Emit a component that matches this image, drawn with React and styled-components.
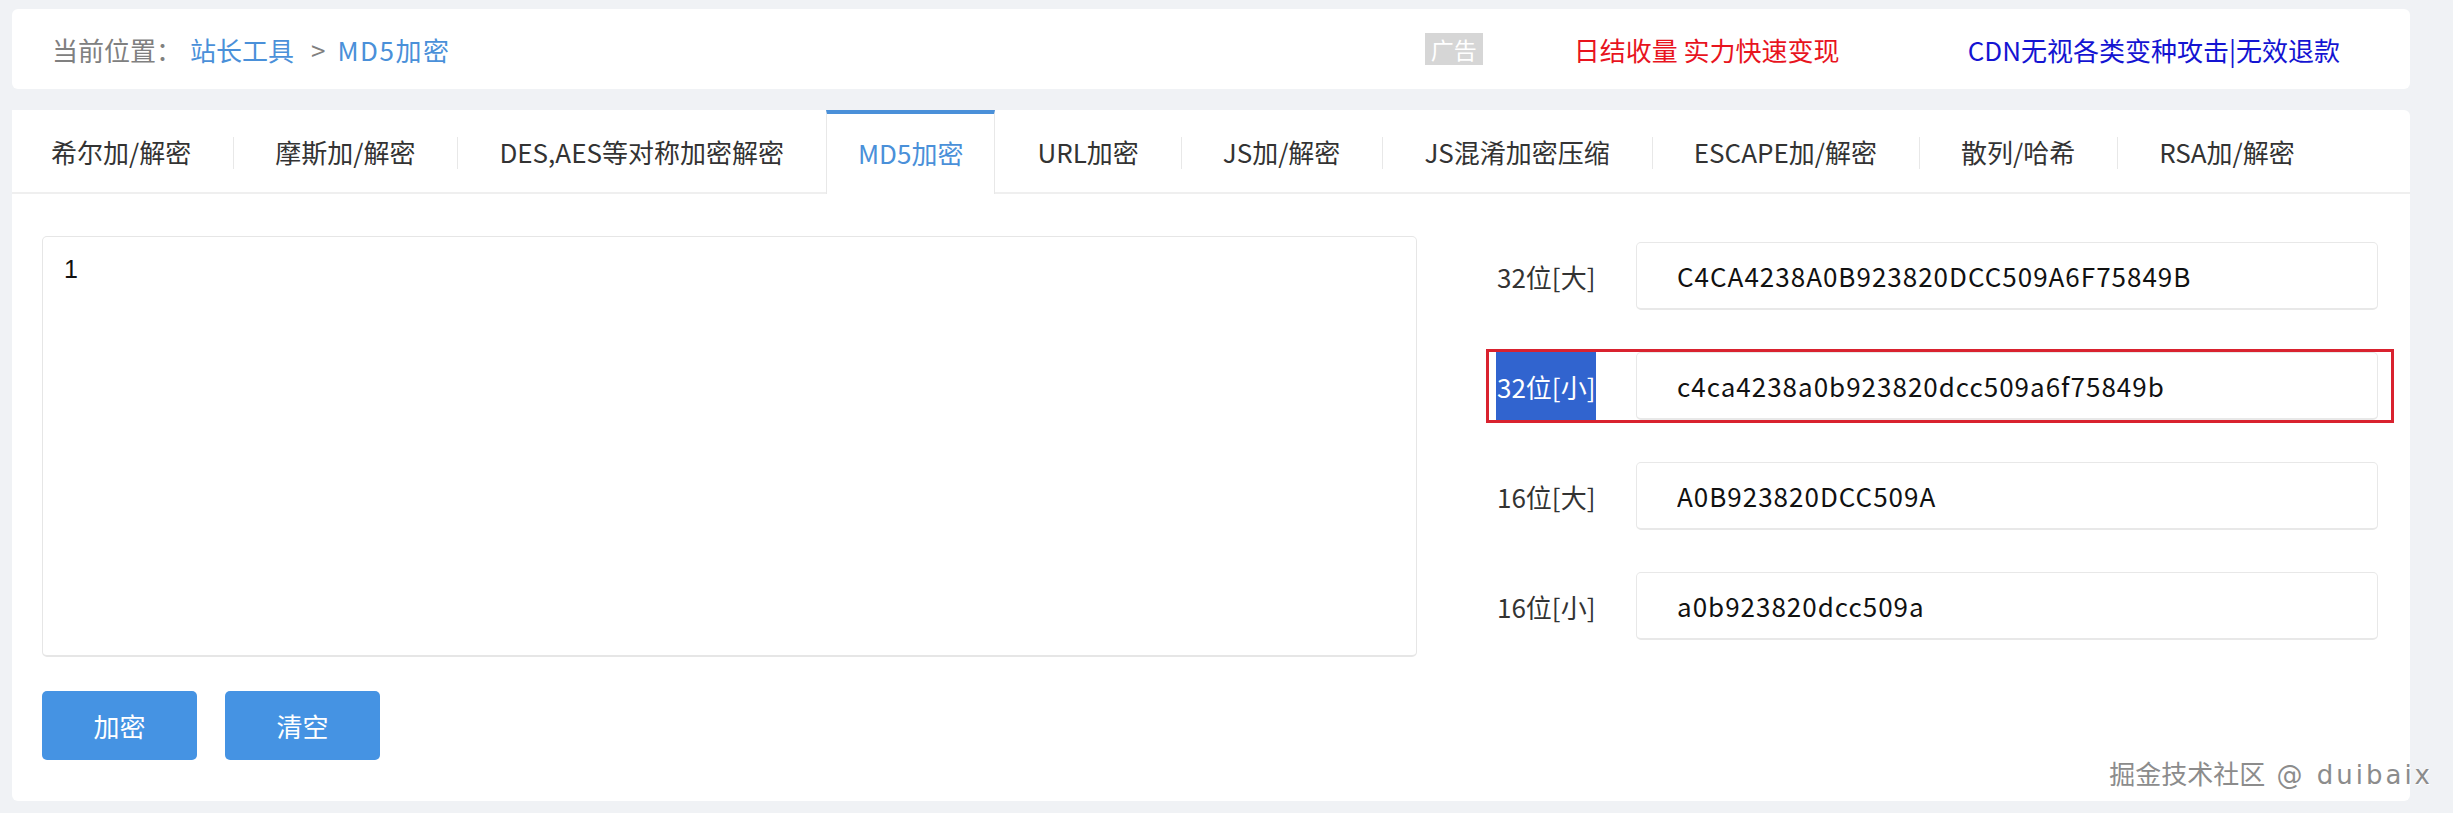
import styled, { createGlobalStyle } from "styled-components"

const GlobalStyle = createGlobalStyle`
    html, body {
        margin: 0;
        padding: 0;
        background: #f0f2f5;
        font-family: "Noto Sans CJK SC", "Noto Sans", sans-serif;
        color: #333;
    }
    * {
        box-sizing: border-box;
    }
`

const tabList = ["希尔加/解密", "摩斯加/解密", "DES,AES等对称加密解密", "MD5加密", "URL加密",
                 "JS加/解密", "JS混淆加密压缩", "ESCAPE加/解密", "散列/哈希", "RSA加/解密"]

const resultList = [{label: "32位[大]", value: "C4CA4238A0B923820DCC509A6F75849B"},
                    {label: "32位[小]", value: "c4ca4238a0b923820dcc509a6f75849b", marked: true},
                    {label: "16位[大]", value: "A0B923820DCC509A"},
                    {label: "16位[小]", value: "a0b923820dcc509a"}]

export default function App() {
    const activeTab = "MD5加密"

    return (
        <Page>
            <GlobalStyle />
            <TopBar>
                <Breadcrumb>
                    <Crumb>当前位置：</Crumb>
                    <CrumbLink>站长工具</CrumbLink>
                    <CrumbArrow>&gt;</CrumbArrow>
                    <CrumbLink wide>MD5加密</CrumbLink>
                </Breadcrumb>
                <AdArea>
                    <AdTag>广告</AdTag>
                    <AdLink color="#e8141e" width={394}>日结收量 实力快速变现</AdLink>
                    <AdLink color="#1414d2">CDN无视各类变种攻击|无效退款</AdLink>
                </AdArea>
            </TopBar>
            <MainCard>
                <TabBar>
                    {tabList.map((tab, index) => {
                        const prevActive = index > 0 && tabList[index - 1] === activeTab
                        return (
                            <Tab key={tab} active={tab === activeTab} first={index === 0 || prevActive}>
                                {tab}
                            </Tab>
                        )
                    })}
                </TabBar>
                <Body>
                    <LeftColumn>
                        <SourceInput defaultValue="1" />
                        <ButtonRow>
                            <Button>加密</Button>
                            <Button>清空</Button>
                        </ButtonRow>
                    </LeftColumn>
                    <ResultList>
                        {resultList.map(item => (
                            <ResultRow key={item.label} marked={item.marked}>
                                <ResultLabel>
                                    <LabelText selected={item.marked}>{item.label}</LabelText>
                                </ResultLabel>
                                <ResultValue readOnly value={item.value} />
                            </ResultRow>
                        ))}
                    </ResultList>
                </Body>
            </MainCard>
            <Watermark>掘金技术社区<WatermarkName> @ duibaix</WatermarkName></Watermark>
        </Page>
    )
}

const Page = styled.div`
    position: relative;
    width: 100%;
    height: 813px;
    padding: 9px 43px 0 12px;
    display: flex;
    flex-direction: column;
    gap: 21px;
    overflow: hidden;
`

const TopBar = styled.div`
    height: 80px;
    background: #fff;
    border-radius: 6px;
    display: flex;
    align-items: center;
    justify-content: space-between;
    padding: 0 70px 0 40px;
    font-size: 26px;
`

const Breadcrumb = styled.div`
    display: flex;
    align-items: center;
`

const Crumb = styled.span`
    color: #808080;
    margin-right: 8px;
`

const CrumbLink = styled.span`
    color: #4a90d9;
    letter-spacing: ${props => props.wide ? "1.5px" : "0"};
`

const CrumbArrow = styled.span`
    color: #808080;
    margin: 0 12px 0 17px;
`

const AdArea = styled.div`
    display: flex;
    align-items: center;
`

const AdTag = styled.span`
    width: 58px;
    height: 32px;
    background: #d6d6d6;
    color: #fff;
    font-size: 23px;
    line-height: 32px;
    text-align: center;
    margin-right: 91px;
`

const AdLink = styled.span`
    color: ${props => props.color};
    width: ${props => props.width ? props.width + "px" : "auto"};
    white-space: nowrap;
`

const MainCard = styled.div`
    height: 691px;
    background: #fff;
    border-radius: 6px;
    display: flex;
    flex-direction: column;
`

const TabBar = styled.div`
    height: 84px;
    display: flex;
    border-bottom: 2px solid #efefef;
`

const Tab = styled.div`
    position: relative;
    height: ${props => props.active ? "84px" : "82px"};
    display: flex;
    align-items: center;
    padding: ${props => props.active ? "0 31px 4px" : "0 42px"};
    font-size: 26px;
    white-space: nowrap;
    color: ${props => props.active ? "#4a90d9" : "#333"};
    background: #fff;
    border-top: ${props => props.active ? "4px solid #4a90d9" : "none"};
    border-left: ${props => props.active ? "1px solid #e8e8e8" : "none"};
    border-right: ${props => props.active ? "1px solid #e8e8e8" : "none"};
    margin-bottom: ${props => props.active ? "-2px" : "0"};
    &:first-child {
        padding-left: ${props => props.active ? "31px" : "39px"};
    }
    &::before {
        content: "";
        display: ${props => props.active || props.first ? "none" : "block"};
        position: absolute;
        left: 0;
        top: 27px;
        height: 32px;
        border-left: 1px solid #e8e8e8;
    }
`

const Body = styled.div`
    flex: 1;
    display: flex;
    gap: 69px;
    padding: 42px 16px 0 30px;
`

const LeftColumn = styled.div`
    width: 1375px;
    display: flex;
    flex-direction: column;
    gap: 34px;
`

const SourceInput = styled.textarea`
    height: 421px;
    resize: none;
    border: 1px solid #e6e6e6;
    border-bottom-width: 2px;
    border-radius: 5px;
    padding: 18px 21px;
    font-family: "Liberation Sans", Arial, sans-serif;
    font-size: 25px;
    color: #111;
    outline: none;
`

const ButtonRow = styled.div`
    display: flex;
    gap: 28px;
`

const Button = styled.button`
    width: 155px;
    height: 69px;
    border: none;
    border-radius: 5px;
    background: #4593e3;
    color: #fff;
    font-family: "Noto Sans CJK SC", sans-serif;
    font-size: 26px;
    cursor: pointer;
`

const ResultList = styled.div`
    flex: 1;
    display: flex;
    flex-direction: column;
    gap: 36px;
    padding-top: 3px;
`

const ResultRow = styled.div`
    display: flex;
    align-items: center;
    gap: 40px;
    padding: 0 13px 0 7px;
    border: 3px solid ${props => props.marked ? "#d9222f" : "transparent"};
`

const ResultLabel = styled.div`
    width: 100px;
    height: 68px;
    display: flex;
    align-items: stretch;
    font-size: 26px;
    color: #333;
`

const LabelText = styled.span`
    display: flex;
    align-items: center;
    padding: 0 1px;
    background: ${props => props.selected ? "#3164cf" : "transparent"};
    color: ${props => props.selected ? "#fff" : "#333"};
    white-space: nowrap;
`

const ResultValue = styled.input`
    flex: 1;
    height: 68px;
    border: 1px solid #e8e8e8;
    border-bottom-width: 2px;
    border-radius: 5px;
    padding: 0 40px;
    font-family: "Noto Sans CJK SC", sans-serif;
    font-size: 26px;
    letter-spacing: 1px;
    color: #111;
    outline: none;
`

const Watermark = styled.div`
    position: absolute;
    right: 20px;
    bottom: 22px;
    font-size: 26px;
    color: #8c8c8c;
    text-shadow: 0 0 2px #fff, 1px 1px 0 #fff;
    white-space: nowrap;
`

const WatermarkName = styled.span`
    font-family: "DejaVu Sans", sans-serif;
    letter-spacing: 3px;
`
